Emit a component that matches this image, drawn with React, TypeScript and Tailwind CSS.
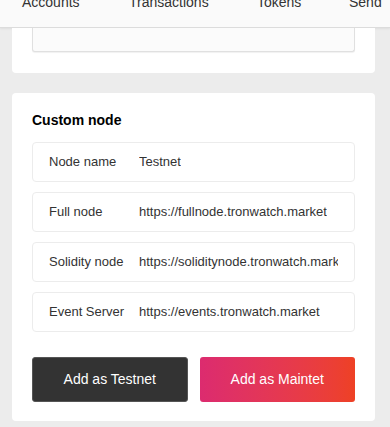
const nav = [
  { label: 'Accounts', w: 'w-[107px]' },
  { label: 'Transactions', w: 'w-[128px]' },
  { label: 'Tokens', w: 'w-[92px]' },
  { label: 'Send', w: 'w-[60px]' },
];

const nodes = [
  { label: 'Node name', value: 'Testnet' },
  { label: 'Full node', value: 'https://fullnode.tronwatch.market' },
  { label: 'Solidity node', value: 'https://soliditynode.tronwatch.market' },
  { label: 'Event Server', value: 'https://events.tronwatch.market' },
];

export default function App() {
  return (
    <div className="w-[390px] h-[427px] overflow-hidden bg-[#ececec] font-['Liberation_Sans',Arial,sans-serif] text-[#333]">
      {/* Top nav (scrolled, only bottom of labels visible) */}
      <div className="h-[28px] overflow-hidden bg-[#fafafa] border-b border-[#dcdcdc] shadow-[0_1px_2px_rgba(0,0,0,0.06)]">
        <div className="-mt-[6px] flex pl-[22px] whitespace-nowrap text-[14px] leading-4 text-[#333]">
          {nav.map((item) => (
            <span key={item.label} className={`${item.w} shrink-0`}>
              {item.label}
            </span>
          ))}
        </div>
      </div>

      {/* Previous card, mostly scrolled away */}
      <div className="ml-[12px] w-[363px] bg-white rounded-b-[4px] px-5 pb-[21px]">
        <div className="h-[24px] bg-[#fbfbfb] border-x border-b border-[#e0e0e0] rounded-b-[3px] shadow-[0_1px_1px_rgba(0,0,0,0.06)]" />
      </div>

      {/* Custom node card */}
      <div className="ml-[12px] mt-[20px] w-[363px] bg-white rounded-[4px] px-5 pt-[17px] pb-[19px]">
        <h3 className="text-[14px] leading-5 font-bold text-black mb-[12px]">Custom node</h3>
        <div className="flex flex-col gap-[10px]">
          {nodes.map((n) => (
            <div
              key={n.label}
              className="h-[40px] flex items-center px-4 border border-[#ececec] rounded-[4px] text-[13px] text-[#333] overflow-hidden whitespace-nowrap"
            >
              <span className="w-[90px] shrink-0">{n.label}</span>
              <span className="overflow-hidden">{n.value}</span>
            </div>
          ))}
        </div>
        <div className="mt-[25px] grid grid-cols-2 gap-[12px]">
          <button className="h-[45px] rounded-[3px] bg-[#333] border border-[#555] text-white text-[14px]">
            Add as Testnet
          </button>
          <button className="h-[45px] rounded-[3px] bg-gradient-to-r from-[#dc2b6f] to-[#ee4124] text-white text-[14px]">
            Add as Maintet
          </button>
        </div>
      </div>
    </div>
  );
}
